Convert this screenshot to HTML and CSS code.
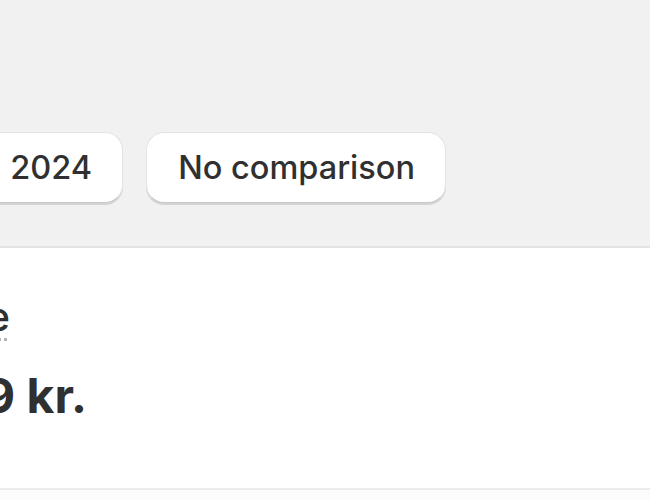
FILE: index.html
```html
<!DOCTYPE html>
<html lang="en">
<head>
<meta charset="utf-8">
<link rel="stylesheet" href="styles.css">
</head>
<body>
  <div class="top">
    <div class="filters">
      <button class="btn">Jan 2024</button>
      <button class="btn">No comparison</button>
    </div>
  </div>
  <div class="card">
    <div class="metric">
      <div class="metric-title">Average order value</div>
      <div class="metric-value">1.234.567,89 kr.</div>
    </div>
  </div>
  <div class="bottom"></div>
</body>
</html>
```

FILE: styles.css
```css
html, body {
  margin: 0;
  padding: 0;
  width: 650px;
  height: 500px;
  overflow: hidden;
  background: #f1f1f1;
  font-family: Inter, "Noto Sans", sans-serif;
  color: #303030;
}
.top {
  height: 246px;
  box-sizing: border-box;
  padding-top: 132px;
  overflow: hidden;
}
.filters {
  display: flex;
  justify-content: flex-end;
  gap: 23px;
  width: 446px;
}
.btn {
  flex: none;
  font-family: inherit;
  height: 71px;
  box-sizing: border-box;
  padding: 0 30px 0 31px;
  border-radius: 18px;
  background: #ffffff;
  border: 1.5px solid #e3e3e3;
  border-bottom-color: #c9c9c9;
  box-shadow: 0 2px 0 #d4d4d4;
  font-size: 32.5px;
  font-weight: 550;
  color: #303030;
  white-space: nowrap;
}
.card {
  background: #ffffff;
  border-top: 2px solid #e3e3e3;
  height: 242px;
  box-sizing: border-box;
  overflow: hidden;
}
.metric {
  display: flex;
  flex-direction: column;
  align-items: flex-end;
  width: 87px;
  padding-top: 45px;
}
.metric-title {
  flex: none;
  margin-right: 77px;
  font-size: 40px;
  font-weight: 550;
  white-space: nowrap;
  text-decoration: underline dotted #b5b5b5;
  text-underline-offset: 7px;
  text-decoration-thickness: 3px;
  line-height: 1.2;
}
.metric-value {
  flex: none;
  margin-top: 26px;
  font-size: 48px;
  font-weight: 700;
  white-space: nowrap;
  line-height: 1.2;
}
.bottom {
  height: 14px;
  border-top: 2px solid #ebebeb;
  background: #fcfcfc;
}
```
